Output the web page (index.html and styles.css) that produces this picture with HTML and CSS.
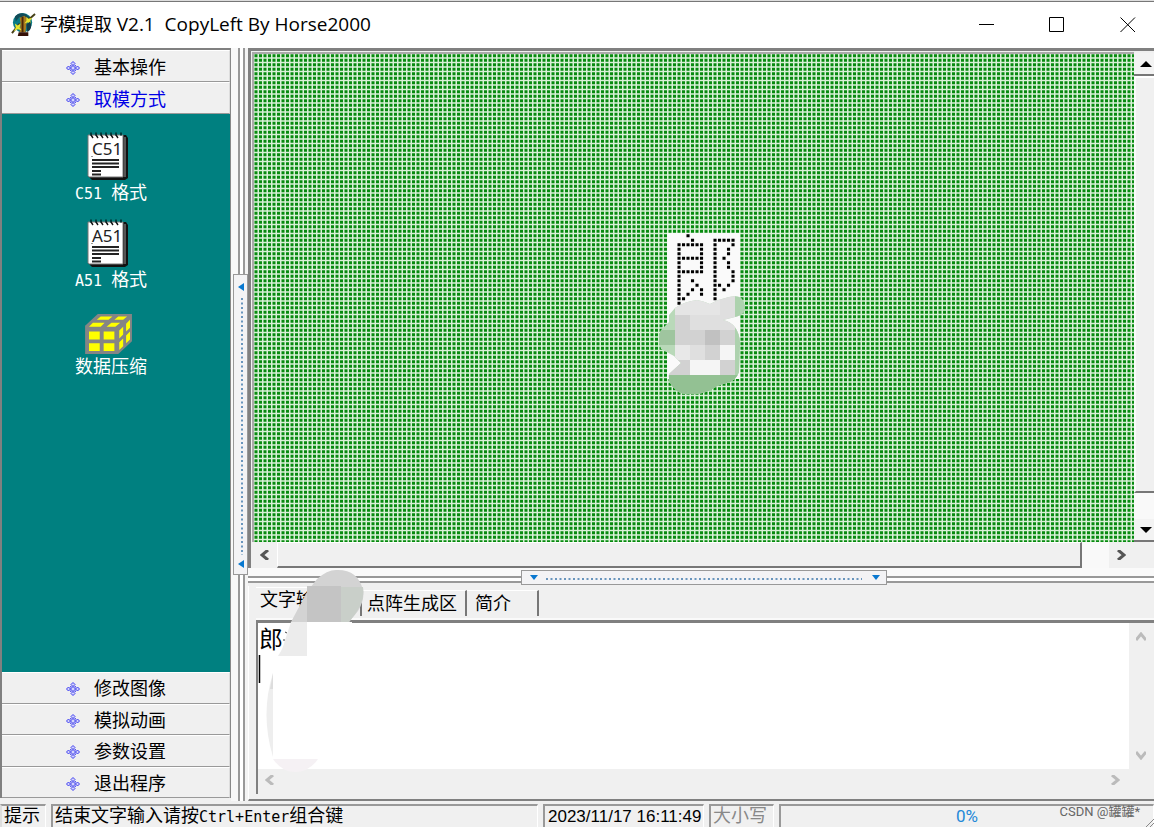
FILE: index.html
```html
<!DOCTYPE html>
<html lang="zh-CN">
<head>
<meta charset="utf-8">
<title>字模提取 V2.1</title>
<link rel="stylesheet" href="styles.css">
</head>
<body>
<svg class="defs" width="0" height="0" aria-hidden="true">
  <defs>
    <symbol id="clover" viewBox="0 0 14 14">
      <g fill="#d5d5fb" stroke="#3c3cf0" stroke-width="1">
        <path d="M7 .5L9 2.500L7 4.500L5 2.500ZM7 9.500L9 11.500L7 13.500L5 11.500ZM2.500 5L4.500 7L2.500 9L.5 7ZM11.500 5L13.500 7L11.500 9L9.500 7Z"/>
        <path d="M7 4.500L9.500 7L7 9.500L4.500 7Z"/>
      </g>
      <path d="M4 4h1.500v1.500H4ZM8.500 4H10v1.500H8.500ZM4 8.500h1.500V10H4ZM8.500 8.500H10V10H8.500Z" fill="#5a5af2"/>
    </symbol>
    <symbol id="notepad" viewBox="0 0 42 50">
      <path d="M4 4H39L41 7V47L38 49H5L2 46Z" fill="#111"/>
      <path d="M1 4H36V46H2L1 45Z" fill="#fff" stroke="#777" stroke-width="1"/>
      <path d="M38 6V46" stroke="#999" stroke-width="1"/>
      <path d="M3 3h2M8 3h2M13 3h2M18 3h2M23 3h2M28 3h2M33 3h2" stroke="#003c3c" stroke-width="3"/>
      <path d="M4 4l2 3M9 4l2 3M14 4l2 3M19 4l2 3M24 4l2 3M29 4l2 3" stroke="#111" stroke-width="1.4"/>
      <path d="M5 29H32M5 32.500H32M5 36H32M5 40H14M5 43.500H14" stroke="#222" stroke-width="1.8"/>
      <path d="M5 25v1" stroke="#333"/>
    </symbol>
  </defs>
</svg>
<div class="window">
  <header class="titlebar">
    <svg class="app-icon" viewBox="0 0 26 26" aria-hidden="true">
      <circle cx="12" cy="11" r="10" fill="#087a86"/>
      <path d="M4 5Q8 0 15 2L20 6 17 9 9 5 5 10Z" fill="#124c58"/>
      <path d="M9 6L14 4 17 7 15 21H9L10 12Z" fill="#a77b20"/>
      <path d="M12 5V21" stroke="#4b2608" stroke-width="2"/>
      <path d="M1 22L9 12M17 9L25 2" stroke="#453f18" stroke-width="2"/>
      <path d="M4 12l3 2 3-2-1 4 2 3-4-1-4 2 2-4ZM16 5l2 2 4-1-2 3 1 3-4-1-3 1 2-3Z" fill="#e8e52d"/>
      <path d="M20 10Q23 18 17 21L16 13Z" fill="#123c49"/>
      <path d="M8 21H18V25H7Z" fill="#351007"/>
    </svg>
    <h1 class="title">字模提取 <span class="latin">V2.1&nbsp; CopyLeft By Horse2000</span></h1>
    <div class="caption-buttons">
      <button type="button" aria-label="最小化"><svg viewBox="0 0 16 16"><path d="M0 7.500H15"/></svg></button>
      <button type="button" aria-label="最大化"><svg viewBox="0 0 16 16"><path d="M.5 .5H14.500V14.500H.5Z"/></svg></button>
      <button type="button" aria-label="关闭"><svg viewBox="0 0 16 16"><path d="M.5 .5L15 15M15 .5L.5 15"/></svg></button>
    </div>
  </header>

  <main class="workspace">
    <nav class="sidebar">
      <div class="group group-top">
        <button type="button"><svg><use href="#clover"/></svg>基本操作</button>
        <button type="button" class="current"><svg><use href="#clover"/></svg>取模方式</button>
      </div>
      <div class="tools">
        <button type="button" class="tool">
          <span class="note"><svg><use href="#notepad"/></svg><b>C51</b></span>
          <span class="label"><span class="mono">C51&nbsp;</span>格式</span>
        </button>
        <button type="button" class="tool">
          <span class="note"><svg><use href="#notepad"/></svg><b>A51</b></span>
          <span class="label"><span class="mono">A51&nbsp;</span>格式</span>
        </button>
        <button type="button" class="tool">
          <svg class="cube" viewBox="0 0 50 42">
            <path d="M0 12L13 0H48V28L34 41H0Z" fill="#858585"/>
            <g fill="#ff0">
              <path d="M4 18H15V26H4ZM19 18H30V26H19ZM4 30H15V38H4ZM19 30H30V38H19Z"/>
              <path d="M4 13L8 9H20L16 13ZM22 13L27 9H36L31 13ZM12 6L16 2.500H28L24 6ZM30 6L34 2.500H43L39 6Z"/>
              <path d="M35 17L39 13V21L35 25ZM42 10L46 6V14L42 18ZM35 29L39 25V33L35 37ZM42 22L46 18V26L42 30Z"/>
            </g>
          </svg>
          <span class="label">数据压缩</span>
        </button>
      </div>
      <div class="group group-bottom">
        <button type="button"><svg><use href="#clover"/></svg>修改图像</button>
        <button type="button"><svg><use href="#clover"/></svg>模拟动画</button>
        <button type="button"><svg><use href="#clover"/></svg>参数设置</button>
        <button type="button"><svg><use href="#clover"/></svg>退出程序</button>
      </div>
    </nav>

    <div class="splitter-v">
      <div class="grip-v">
        <svg class="tri-left" viewBox="0 0 6 8"><path d="M6 0V8L0 4Z"/></svg>
        <svg class="dots-v"><line x1="1" y1="0" x2="1" y2="100%"/></svg>
        <svg class="tri-left" viewBox="0 0 6 8"><path d="M6 0V8L0 4Z"/></svg>
      </div>
    </div>

    <div class="right">
      <section class="viewer">
        <div class="canvas">
          <svg class="lattice">
            <defs>
              <pattern id="cells" width="9" height="9" patternUnits="userSpaceOnUse">
                <rect width="9" height="9" fill="#d9f1d7"/>
                <path d="M.5 .2h3v3h-3zM5 .2h3v3h-3zM.5 4.700h3v3h-3zM5 4.700h3v3h-3z" fill="#078a0f"/>
              </pattern>
            </defs>
            <rect width="100%" height="100%" fill="url(#cells)"/>
          </svg>
          <svg class="glyph" viewBox="0 0 86 164">
            <rect x="8" y="1" width="73" height="146" fill="#fafafa"/>
            <path class="pixels" transform="translate(20 3.700) scale(4.500)" d="M2 0h.01M3 1h.01M8 1h.01M9 1h.01M10 1h.01M11 1h.01M12 1h.01M0 2h.01M1 2h.01M2 2h.01M3 2h.01M4 2h.01M5 2h.01M8 2h.01M12 2h.01M0 3h.01M5 3h.01M8 3h.01M11 3h.01M0 4h.01M5 4h.01M8 4h.01M11 4h.01M0 5h.01M1 5h.01M2 5h.01M3 5h.01M4 5h.01M5 5h.01M8 5h.01M10 5h.01M0 6h.01M5 6h.01M8 6h.01M11 6h.01M0 7h.01M5 7h.01M8 7h.01M11 7h.01M0 8h.01M1 8h.01M2 8h.01M3 8h.01M4 8h.01M5 8h.01M8 8h.01M12 8h.01M0 9h.01M8 9h.01M12 9h.01M0 10h.01M3 10h.01M8 10h.01M12 10h.01M0 11h.01M4 11h.01M8 11h.01M9 11h.01M11 11h.01M0 12h.01M3 12h.01M5 12h.01M8 12h.01M10 12h.01M0 13h.01M2 13h.01M5 13h.01M8 13h.01M0 14h.01M1 14h.01M8 14h.01M0 15h.01"/>
            <clipPath id="blot"><path d="M10 83L16 76Q24 70 38 68Q44 69 51 72Q60 67 70 65Q78 63 82 66Q86 70 86 77Q85 83 76 85L64 88Q79 91 81 110L80 140Q77 149 68 151Q58 153 52 158Q42 163 31 162Q20 163 15 156Q9 151 10 142L22 131L15 124L2 117Q-2 106 2 98L10 90Z"/></clipPath>
            <g clip-path="url(#blot)">
              <rect width="86" height="164" fill="#b9d9b9"/>
              <path d="M16 64H46V83H16ZM46 64H61V83H46Z" fill="#e5e5e5"/>
              <path d="M61 64H76V83H61ZM31 83H81V98H31ZM31 113H46V128H31Z" fill="#dfdfdf"/>
              <path d="M16 83H31V113H16ZM31 98H46V113H31ZM61 98H81V113H61ZM61 128H77V143H61ZM9 128H31V143H9ZM46 113H61V128H46Z" fill="#d2d2d2"/>
              <path d="M46 98H61V113H46Z" fill="#c1c1c1"/>
              <path d="M16 113H31V128H16Z" fill="#e8e8e8"/>
              <path d="M61 113H76V128H61ZM31 128H61V143H31Z" fill="#f5f5f5"/>
              <path d="M0 98H16V113H0Z" fill="#9fc59f"/>
              <path d="M0 143H86V164H0Z" fill="#93c193"/>
              <path d="M76 64H86V143H76Z" fill="#add2ae"/>
            </g>
          </svg>
        </div>
        <div class="vbar">
          <button type="button" aria-label="向上滚动"><svg viewBox="0 0 12 6"><path d="M0 6H12L6 0Z"/></svg></button>
          <div class="vthumb"></div>
          <div class="vtrack"></div>
          <button type="button" aria-label="向下滚动"><svg viewBox="0 0 12 6"><path d="M0 0H12L6 6Z"/></svg></button>
        </div>
        <div class="hbar">
          <button type="button" aria-label="向左滚动"><svg viewBox="0 0 10 10"><path d="M8 0L2 5L8 10"/></svg></button>
          <div class="hthumb"></div>
          <div class="htrack"></div>
          <button type="button" aria-label="向右滚动"><svg viewBox="0 0 10 10"><path d="M2 0L8 5L2 10"/></svg></button>
        </div>
      </section>

      <div class="splitter-h">
        <div class="grip-h">
          <svg class="tri-down" viewBox="0 0 8 5"><path d="M0 0H8L4 5Z"/></svg>
          <svg class="dots-h"><line x1="0" y1="1" x2="100%" y2="1"/></svg>
          <svg class="tri-down" viewBox="0 0 8 5"><path d="M0 0H8L4 5Z"/></svg>
        </div>
      </div>

      <section class="notebook">
        <div class="tabs" role="tablist">
          <button type="button" role="tab" aria-selected="true" class="tab-input">文字输入区</button>
          <button type="button" role="tab" class="tab-output">点阵生成区</button>
          <button type="button" role="tab" class="tab-about">简介</button>
        </div>
        <div class="editor">
          <textarea aria-label="文字输入区" spellcheck="false">郎</textarea>
          <div class="evbar">
            <svg viewBox="0 0 10 10"><path d="M0 8L5 2L10 8"/></svg>
            <svg viewBox="0 0 10 10"><path d="M0 2L5 8L10 2"/></svg>
          </div>
          <div class="ehbar">
            <svg viewBox="0 0 10 10"><path d="M8 0L2 5L8 10"/></svg>
            <svg viewBox="0 0 10 10"><path d="M2 0L8 5L2 10"/></svg>
          </div>
        </div>
        <svg class="smudge" viewBox="0 0 110 206" aria-hidden="true">
          <path d="M53 23L63 10Q74 0 84 1Q104 1 109 21Q111 30 104 42L95 53H37Z" fill="#d3d3d3"/>
          <path d="M87 18H109Q112 34 95 53H87Z" fill="#c9cfc9"/>
          <path d="M53 17H87V53H53Z" fill="#c4c4c4"/>
          <path d="M37 53H53V87H24Q29 80 31 71Z" fill="#ececec"/>
          <path d="M53 53H98V87H53Z" fill="#fff"/>
          <path d="M19 104Q6 145 19 188Z" fill="#eee"/>
          <path d="M19 104L16 120H19Z" fill="#ddd"/>
          <path d="M19 190H64Q55 203 41 203Q28 203 19 190Z" fill="#f5f1f4"/>
          <path d="M31 63l2 1M29 71h2" stroke="#444"/>
          <path d="M5.500 86V114" stroke="#000" stroke-width="1.5"/>
        </svg>
      </section>
    </div>
  </main>

  <footer class="statusbar">
    <div class="cell cell-hint">提示</div>
    <div class="cell cell-message">结束文字输入请按<span class="mono">Ctrl+Enter</span>组合键</div>
    <div class="cell cell-time">2023/11/17 16:11:49</div>
    <div class="cell cell-caps">大小写</div>
    <div class="cell cell-progress">0%</div>
    <span class="watermark">CSDN @罐罐*</span>
    <svg class="resize" viewBox="0 0 8 10"><path d="M0 10L8 2M4 10L8 6"/></svg>
  </footer>
</div>
</body>
</html>
```

FILE: styles.css
```css
* { box-sizing: border-box; }
html, body { height: 100%; }
body {
  margin: 0;
  overflow: hidden;
  background: #f0f0f0;
  color: #000;
  font: 18px/24px "Liberation Sans", "Noto Sans CJK SC", sans-serif;
}
button {
  margin: 0;
  padding: 0;
  border: 0;
  background: none;
  color: inherit;
  font: inherit;
}
svg { display: block; }
.defs { position: absolute; }
.mono { font-family: "DejaVu Sans Mono", monospace; font-size: 15px; line-height: 20px; }

.window { display: flex; flex-direction: column; height: 100vh; }

.titlebar {
  display: flex;
  align-items: center;
  flex: none;
  height: 48px;
  padding-left: 11px;
  border-top: 1px solid #ddd;
  box-shadow: inset 0 1px #777;
  background: #fff;
}
.app-icon { width: 25px; height: 25px; }
.title {
  flex: 1;
  margin: 0 0 2px 4px;
  font: 400 18px/24px "Open Sans", "Noto Sans CJK SC", sans-serif;
}
.latin { font-size: 19px; }
.caption-buttons { display: flex; }
.caption-buttons button { display: grid; place-items: center; width: 70px; height: 46px; }
.caption-buttons button:last-child { width: 53px; margin-left: 9px; }
.caption-buttons svg { width: 16px; height: 16px; overflow: visible; fill: none; stroke: #000; }

.workspace { display: flex; flex: 1; min-height: 0; }

.sidebar {
  display: flex;
  flex-direction: column;
  flex: none;
  width: 231px;
  margin-bottom: 3px;
  border-top: 2px solid #808080;
  border-left: 2px solid #808080;
  border-right: 1px solid #888;
}
.group { display: grid; flex: none; grid-auto-rows: 1fr; }
.group-top { height: 64px; }
.group-bottom { height: 126px; }
.group button {
  display: flex;
  align-items: center;
  gap: 14px;
  padding: 3px 0 0 64px;
  border-top: 1px solid #fff;
  border-bottom: 1px solid #999;
  border-right: 1px solid #ddd;
  background: #f0f0f0;
}
.group svg { width: 14px; height: 14px; }
.group .current { color: #0000e6; }

.tools {
  display: flex;
  flex-direction: column;
  align-items: flex-start;
  flex: 1;
  padding: 17px 0 0 73px;
  background: #008080;
  color: #fff;
}
.tool { display: flex; flex-direction: column; align-items: flex-start; height: 87px; }
.note { display: grid; width: 42px; height: 50px; margin-left: 12px; }
.note > * { grid-area: 1 / 1; }
.note svg { width: 42px; height: 50px; }
.note b { padding: 6px 0 0 5px; color: #222; font: 17px/24px "Noto Sans", sans-serif; text-align: left; }
.cube { width: 49px; height: 41px; margin: 9px 0 0 10px; }
.label { height: 24px; white-space: nowrap; }

.splitter-v {
  display: flex;
  align-items: center;
  justify-content: flex-end;
  flex: none;
  width: 17px;
  background: linear-gradient(90deg, #f8f8f8 7px, #999 7px 9px, #fff 9px 12px, #999 12px 14px, #f4f4f4 14px);
}
.grip-v {
  display: flex;
  flex-direction: column;
  align-items: center;
  justify-content: space-between;
  width: 15px;
  height: 40%;
  padding: 8px 0 6px;
  border: 1px solid #999;
  background: #f3f3f5;
}
.tri-left { width: 6px; height: 8px; fill: #0878d0; }
.tri-down { width: 8px; height: 5px; fill: #0878d0; }
.dots-v { flex: 1; width: 2px; margin: 7px 0 5px 2px; }
.dots-h { flex: 1; height: 2px; margin: 2px 10px 0 8px; }
.dots-v line, .dots-h line { stroke: #6995bd; stroke-width: 2; stroke-dasharray: 2 2.5; }

.right { display: flex; flex-direction: column; flex: 1; min-width: 0; }

.viewer {
  display: grid;
  flex: 1;
  grid-template: 1fr 26px / 1fr 20px;
  min-height: 0;
  border-top: 3px solid #808080;
  border-left: 3px solid #808080;
  background: #f0f0f0;
}
.canvas {
  position: relative;
  margin: 1px 0 0 1px;
  border-top: 2px solid #aaa;
  border-left: 2px solid #aaa;
  overflow: hidden;
}
.lattice { width: 100%; height: 100%; }
.glyph { position: absolute; left: 405px; top: 178px; width: 86px; height: 164px; }
.pixels { stroke: #000; stroke-width: .68; stroke-linecap: square; }

.vbar { display: flex; flex-direction: column; padding-top: 2px; }
.vbar button { display: grid; place-items: center; height: 23px; border-bottom: 2px solid #777; background: #f3f3f3; }
.vbar svg { width: 12px; height: 6px; margin-left: 4px; }
.vthumb { flex: 1; border-top: 2px solid #fff; border-left: 2px solid #fafafa; border-bottom: 2px solid #777; }
.vtrack { height: 26px; background: #f9f9f9; }

.hbar { display: flex; grid-column: 1 / 3; padding-left: 2px; }
.hbar button { display: grid; place-items: center; width: 24px; }
.hbar button:last-child { margin-right: 21px; }
.hbar svg { width: 10px; height: 10px; fill: none; stroke: #555; stroke-width: 3; }
.hthumb { flex: 1; border-top: 1px solid #fff; border-left: 1px solid #fff; border-right: 2px solid #777; border-bottom: 2px solid #777; }
.htrack { width: 27px; background: #f9f9f9; }

.splitter-h {
  display: flex;
  justify-content: center;
  flex: none;
  height: 18px;
  padding: 2px 0 0 6px;
  background: linear-gradient(#fafafa 8px, #999 8px 10px, #fff 10px 13px, #999 13px 15px, #f0f0f0 15px);
}
.grip-h {
  display: flex;
  align-items: center;
  width: 366px;
  height: 15px;
  padding: 0 6px 0 8px;
  border: 1px solid #999;
  background: #f3f3f5;
}

.notebook {
  position: relative;
  display: flex;
  flex-direction: column;
  flex: none;
  height: 215px;
  padding: 1px 0 5px 7px;
  border-left: 1px solid #fff;
  border-bottom: 2px solid #808080;
}
.tabs { display: flex; align-items: flex-end; height: 33px; padding-bottom: 4px; }
.tabs button { height: 26px; border-top: 1px solid #fff; border-right: 2px solid #777; text-align: left; }
.tabs .tab-input { width: 106px; height: 29px; padding: 0 0 4px 4px; }
.tabs .tab-output { width: 105px; padding-left: 5px; }
.tabs .tab-about { width: 72px; padding-left: 8px; }

.editor {
  display: grid;
  flex: 1;
  grid-template: 1fr 25px / 1fr 25px;
  min-height: 0;
  border-top: 3px solid #808080;
  border-left: 2px solid #808080;
  box-shadow: 0 -2px #fafafa;
}
.editor textarea {
  width: 100%;
  height: 100%;
  padding: 0 1px;
  border: 0;
  outline: 0;
  resize: none;
  overflow: hidden;
  background: #fff;
  color: #000;
  font: 24px/30px "Noto Sans CJK SC", sans-serif;
}
.editor svg { width: 10px; height: 10px; fill: none; stroke: #bbb; stroke-width: 3; }
.evbar { display: flex; flex-direction: column; align-items: center; justify-content: space-between; padding: 9px 2px 9px 0; }
.ehbar { display: flex; grid-column: 1 / 3; align-items: center; justify-content: space-between; padding: 0 34px 4px 7px; }
.smudge { position: absolute; left: 5px; top: -17px; width: 110px; height: 206px; }

.statusbar {
  position: relative;
  display: flex;
  flex: none;
  gap: 5px;
  height: 26px;
  padding-top: 3px;
  line-height: 21px;
  white-space: nowrap;
}
.cell { border-top: 2px solid #999; border-left: 2px solid #999; border-right: 1px solid #fff; }
.cell-hint { width: 46px; padding-left: 2px; border-left-color: #ddd; }
.cell-message { width: 487px; padding-left: 2px; }
.cell-time { width: 161px; padding-left: 3px; font-size: 17px; }
.cell-caps { width: 65px; padding-left: 2px; color: #888; }
.cell-progress { flex: 1; color: #2489d8; font-family: Roboto, sans-serif; font-size: 17px; text-align: center; }
.watermark { position: absolute; right: 14px; top: 1px; color: #666; font: 13px/20px Roboto, "Noto Sans CJK SC", sans-serif; }
.resize { position: absolute; right: 0; bottom: 0; width: 8px; height: 10px; fill: none; stroke: #888; }
```
